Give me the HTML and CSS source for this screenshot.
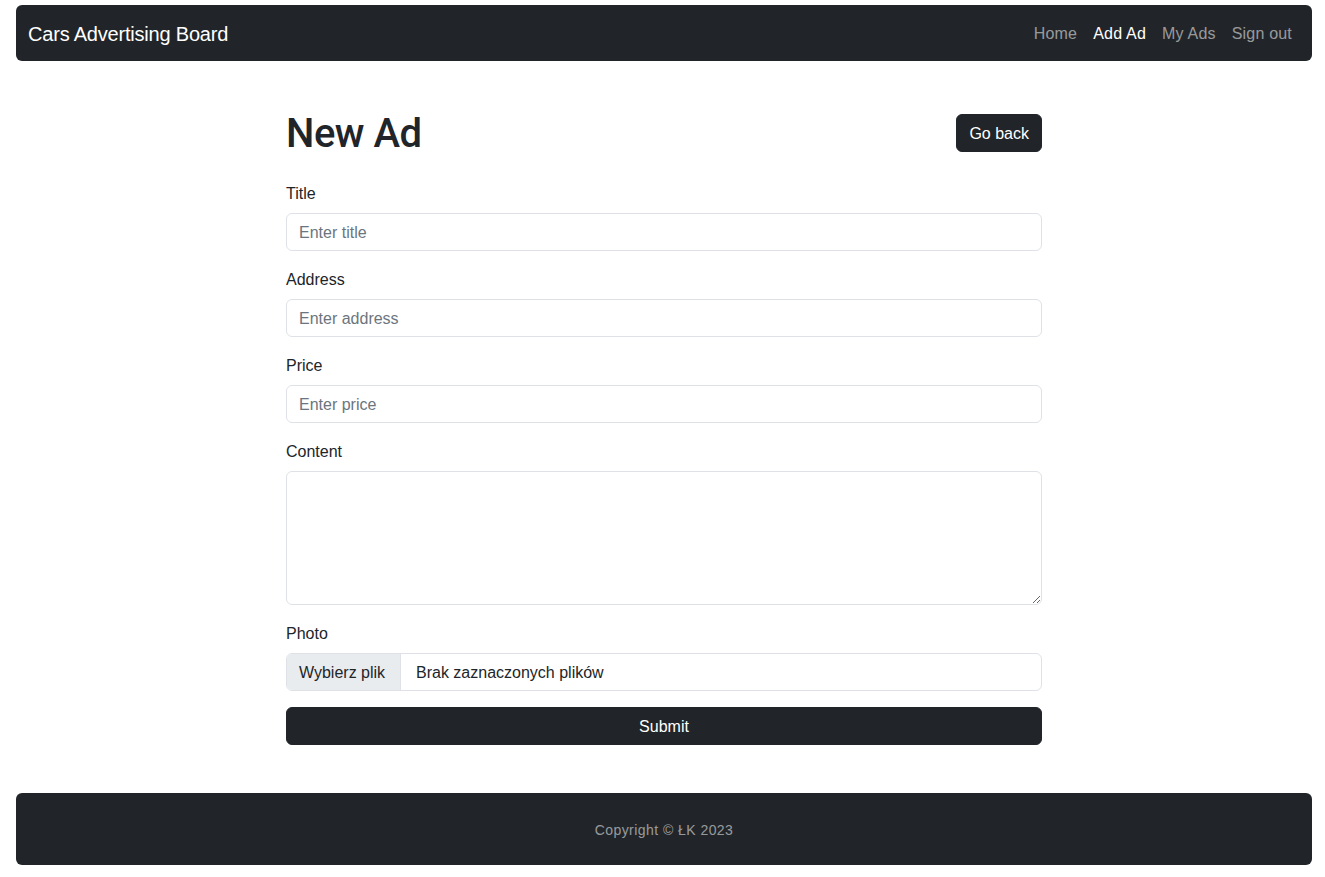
FILE: index.html
```html
<!DOCTYPE html>
<html lang="en">
<head>
<meta charset="utf-8">
<title>New Ad</title>
<link rel="stylesheet" href="styles.css">
</head>
<body>
<nav class="navbar">
  <a class="brand" href="#">Cars Advertising Board</a>
  <ul class="nav">
    <li><a class="nav-link" href="#">Home</a></li>
    <li><a class="nav-link active" href="#">Add Ad</a></li>
    <li><a class="nav-link" href="#">My Ads</a></li>
    <li><a class="nav-link" href="#">Sign out</a></li>
  </ul>
</nav>
<main class="main">
  <div class="head-row">
    <h1 class="title">New Ad</h1>
    <a class="btn btn-dark" href="#">Go back</a>
  </div>
  <form class="form">
    <div class="field">
      <label class="label">Title</label>
      <input class="control" type="text" placeholder="Enter title">
    </div>
    <div class="field">
      <label class="label">Address</label>
      <input class="control" type="text" placeholder="Enter address">
    </div>
    <div class="field">
      <label class="label">Price</label>
      <input class="control" type="text" placeholder="Enter price">
    </div>
    <div class="field">
      <label class="label">Content</label>
      <textarea class="control textarea"></textarea>
    </div>
    <div class="field">
      <label class="label">Photo</label>
      <div class="file">
        <span class="file-btn">Wybierz plik</span>
        <span class="file-name">Brak zaznaczonych plików</span>
      </div>
    </div>
    <button class="btn btn-dark btn-block" type="button">Submit</button>
  </form>
</main>
<footer class="footer">
  <p class="copy">Copyright © ŁK 2023</p>
</footer>
</body>
</html>
```
FILE: styles.css
```css
* { box-sizing: border-box; }
html, body { margin: 0; padding: 0; }
body {
  font-family: "Liberation Sans", Arial, sans-serif;
  font-size: 16px;
  line-height: 1.5;
  color: #212529;
  background: #fff;
  padding: 5px 13px 12px 16px;
}
a { text-decoration: none; }
.navbar {
  background: #212529;
  border-radius: 6px;
  height: 56px;
  display: flex;
  align-items: center;
  justify-content: space-between;
  padding: 0 12px;
}
.brand {
  color: #fff;
  font-size: 20px;
  padding-top: 1px;
  letter-spacing: -0.2px;
}
.nav {
  list-style: none;
  margin: 0;
  padding: 0;
  display: flex;
}
.nav-link {
  display: block;
  padding: 9px 8px 7px;
  color: rgba(255,255,255,.55);
  letter-spacing: 0.2px;
}
.nav-link.active { color: #fff; }
.main {
  width: 756px;
  margin: 48px auto 0;
}
.head-row {
  display: flex;
  justify-content: space-between;
  align-items: center;
  height: 48px;
  margin-bottom: 24px;
}
.title {
  margin: 0;
  font-family: Roboto, "Liberation Sans", sans-serif;
  font-size: 40px;
  font-weight: 500;
  line-height: 46px;
  letter-spacing: -0.5px;
  padding-top: 2px;
}
.btn {
  display: inline-block;
  padding: 7px 12px 5px;
  font-size: 16px;
  line-height: 24px;
  border-radius: 6px;
  border: 1px solid #212529;
  font-family: inherit;
}
.btn-dark { background: #212529; color: #fff; }
.btn-block { width: 100%; display: block; text-align: center; }
.field { margin-bottom: 16px; }
.label { display: block; margin-bottom: 8px; padding-top: 1px; height: 24px; }
.control {
  display: block;
  width: 100%;
  height: 38px;
  padding: 7px 12px 5px;
  font-family: inherit;
  font-size: 16px;
  line-height: 24px;
  color: #212529;
  border: 1px solid #dee2e6;
  border-radius: 6px;
  background: #fff;
  outline: none;
}
.control::placeholder { color: #6c757d; }
.textarea { height: 134px; resize: vertical; }
.file {
  display: flex;
  height: 38px;
  border: 1px solid #dee2e6;
  border-radius: 6px;
  overflow: hidden;
}
.file-btn {
  background: #e9ecef;
  padding: 7px 12px 5px;
  border-right: 1px solid #dee2e6;
  line-height: 24px;
  width: 114px;
}
.file-name {
  padding: 7px 15px 5px;
  line-height: 24px;
}
.footer {
  margin-top: 48px;
  background: #212529;
  border-radius: 6px;
  height: 72px;
  display: flex;
  align-items: center;
  justify-content: center;
}
.copy {
  margin: 0;
  padding-top: 2px;
  font-size: 14px;
  letter-spacing: 0.45px;
  color: rgba(255,255,255,.55);
}
```
